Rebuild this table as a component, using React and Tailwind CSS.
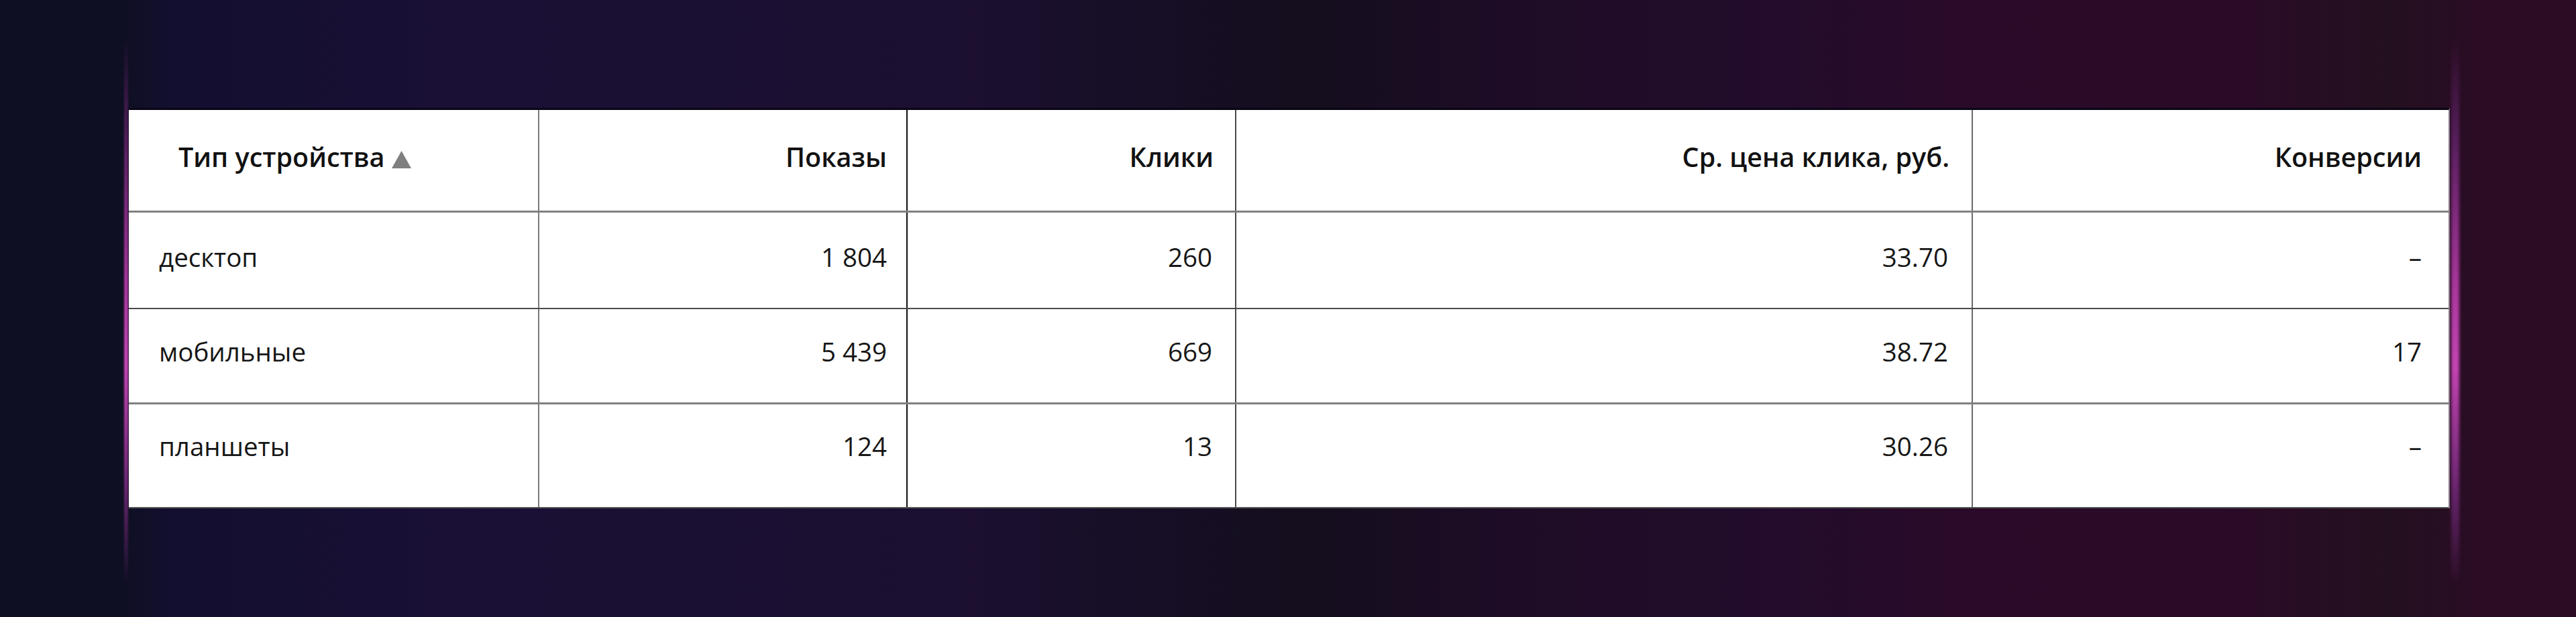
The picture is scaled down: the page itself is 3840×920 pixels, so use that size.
import React from 'react';

const rows = [
  { device: 'десктоп', shows: '1 804', clicks: '260', cpc: '33.70', conv: '–' },
  { device: 'мобильные', shows: '5 439', clicks: '669', cpc: '38.72', conv: '17' },
  { device: 'планшеты', shows: '124', clicks: '13', cpc: '30.26', conv: '–' },
];

// row heights / bottom borders differ a bit, as in the capture
const rowStyles = [
  'h-[144px] border-b-2 border-b-[#4a4a4a]',
  'h-[142px] border-b-[3px] border-b-[#808080]',
  'h-[155px] border-b-2 border-b-[#555555]',
];
const cellPad = ['pb-[10px]', 'pb-[12px]', 'pb-[28px]'];

const SortUp = () => (
  <svg width="29" height="26" viewBox="0 0 29 26" className="ml-[10px] mt-[6px] shrink-0">
    <polygon points="14.5,0 29,26 0,26" fill="#7f7f7f" />
  </svg>
);

export default function App() {
  return (
    <div className="w-full h-[920px] overflow-hidden font-['Open_Sans',sans-serif] bg-[linear-gradient(90deg,#0f0f24_0px,#0f0f24_190px,#130f30_260px,#1a1035_700px,#1b1032_1200px,#1c0f30_1450px,#170f28_1650px,#140e1e_1950px,#1e0c26_2250px,#230c2c_2650px,#2a0a28_2950px,#2a0b27_3350px,#23101f_3560px,#2a0c24_3700px)] pt-[161px] pl-[192px]">
      <div className="relative w-[3460px]">
        {/* side glows */}
        <div className="absolute left-[-7px] top-[-105px] bottom-[-115px] w-[6px] blur-[1px] bg-[linear-gradient(180deg,transparent_0%,#5a2060_20%,#a8379c_45%,#c445b4_60%,#6a2670_82%,transparent_100%)]" />
        <div className="absolute right-[-14px] top-[-105px] bottom-[-115px] w-[12px] blur-[2px] bg-[linear-gradient(180deg,transparent_0%,#5a2060_20%,#a8379c_45%,#c445b4_60%,#6a2670_82%,transparent_100%)]" />

        <div className="relative bg-white border-t-[3px] border-t-[#0a0614] border-r-2 border-r-[#8a7a8a] leading-[1.362]">
          {/* header */}
          <div className="grid grid-cols-[612px_549px_490px_1098px_709px] h-[153px] border-b-[3px] border-b-[#808080] text-[39.5px] font-semibold text-[#111111]">
            <div className="flex items-center pl-[74px] pb-[8px] border-r-2 border-r-[#7a7a7a]">
              <span>Тип устройства</span>
              <SortUp />
            </div>
            <div className="flex items-center justify-end pr-[29px] pb-[8px] border-r-2 border-r-[#111111]">Показы</div>
            <div className="flex items-center justify-end pr-[32px] pb-[8px] border-r-2 border-r-[#4a4a4a]">Клики</div>
            <div className="flex items-center justify-end pr-[33px] pb-[8px] border-r-2 border-r-[#6a6a6a]">Ср. цена клика, руб.</div>
            <div className="flex items-center justify-end pr-[40px] pb-[8px]">Конверсии</div>
          </div>

          {/* body */}
          {rows.map((r, i) => (
            <div
              key={r.device}
              className={`grid grid-cols-[612px_549px_490px_1098px_709px] text-[38.5px] text-[#161616] ${rowStyles[i]}`}
            >
              <div className={`flex items-center pl-[45px] border-r-2 border-r-[#7a7a7a] ${cellPad[i]}`}>{r.device}</div>
              <div className={`flex items-center justify-end pr-[29px] border-r-2 border-r-[#111111] ${cellPad[i]}`}>{r.shows}</div>
              <div className={`flex items-center justify-end pr-[34px] border-r-2 border-r-[#4a4a4a] ${cellPad[i]}`}>{r.clicks}</div>
              <div className={`flex items-center justify-end pr-[35px] border-r-2 border-r-[#6a6a6a] ${cellPad[i]}`}>{r.cpc}</div>
              <div className={`flex items-center justify-end pr-[40px] ${cellPad[i]}`}>{r.conv}</div>
            </div>
          ))}
        </div>
      </div>
    </div>
  );
}
